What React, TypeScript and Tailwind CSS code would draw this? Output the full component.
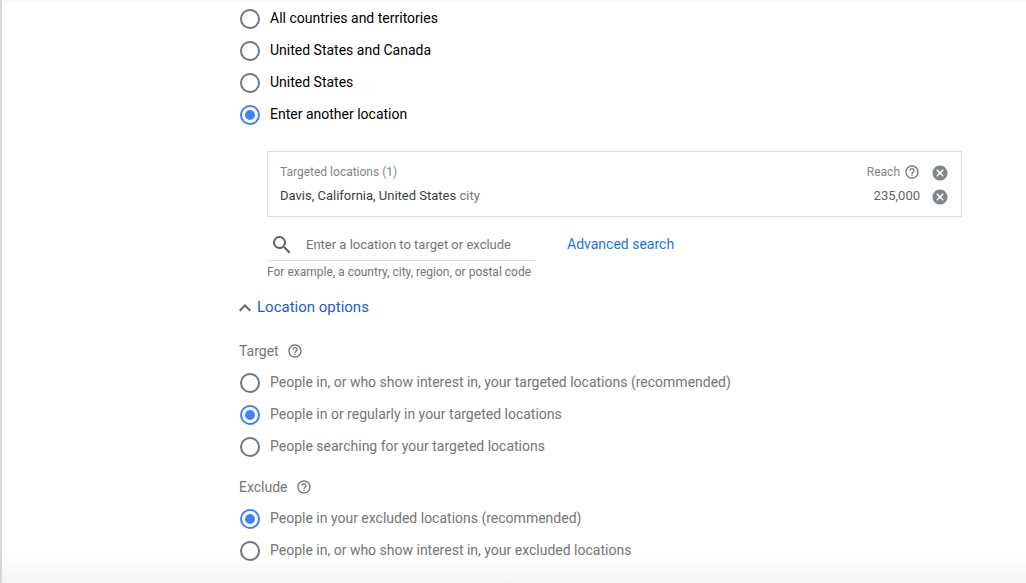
import { useState } from 'react'
import { MdCancel, MdExpandLess, MdHelpOutline, MdSearch } from 'react-icons/md'

interface RadioListProps {
  name: string
  legend: string
  options: string[]
  initial: number
  className?: string
}

const COUNTRY_OPTIONS = [
  'All countries and territories',
  'United States and Canada',
  'United States',
  'Enter another location',
]

const TARGET_OPTIONS = [
  'People in, or who show interest in, your targeted locations (recommended)',
  'People in or regularly in your targeted locations',
  'People searching for your targeted locations',
]

const EXCLUDE_OPTIONS = [
  'People in your excluded locations (recommended)',
  'People in, or who show interest in, your excluded locations',
]

function RadioList({ name, legend, options, initial, className }: RadioListProps) {
  const [selected, setSelected] = useState(initial)

  return (
    <div role="radiogroup" aria-label={legend} className={className}>
      {options.map((option, i) => (
        <label key={option} className="flex h-8 cursor-pointer items-center gap-2.5 pl-px">
          <input
            type="radio"
            name={name}
            checked={selected === i}
            onChange={() => setSelected(i)}
            className="mt-0.5 grid size-5 shrink-0 appearance-none place-items-center rounded-full border-2 border-[#757575] before:size-2.5 before:rounded-full checked:border-[#4080fa] checked:before:bg-[#4080fa]"
          />
          <span>{option}</span>
        </label>
      ))}
    </div>
  )
}

function HelpButton({ label }: { label: string }) {
  return (
    <button type="button" aria-label={label} className="text-[#757575]">
      <MdHelpOutline className="size-4" />
    </button>
  )
}

function RemoveButton({ label }: { label: string }) {
  return (
    <button type="button" aria-label={label} className="mt-0.5 ml-[11px] text-[#80868b]">
      <MdCancel className="size-[18px]" />
    </button>
  )
}

export default function App() {
  return (
    <main className="min-h-screen border-l-2 border-[#d8d8d8] bg-linear-to-t from-[#f5f5f5] to-white to-[28px] font-[Roboto,sans-serif] text-sm text-[#757575]">
      <div className="h-0.5 bg-[#f7f7f7]" />
      <div className="pr-16 pl-[237px]">
        <RadioList
          name="country"
          legend="Locations"
          options={COUNTRY_OPTIONS}
          initial={3}
          className="text-black"
        />

        <div className="mt-[21px] ml-7 flex flex-col border border-[#dadce0] px-3 py-2">
          <div className="flex h-6 items-center text-xs text-[#80868b]">
            <span className="grow">Targeted locations (1)</span>
            <span className="mr-1">Reach</span>
            <HelpButton label="About reach" />
            <RemoveButton label="Remove all locations" />
          </div>
          <div className="flex h-6 items-center text-[13px]">
            <span className="grow">
              <span className="text-[#3c4043]">Davis, California, United States</span> city
            </span>
            <span className="text-[#5f6368]">235,000</span>
            <RemoveButton label="Remove Davis" />
          </div>
        </div>

        <div className="mt-3 ml-7 flex items-start gap-8">
          <div>
            <div className="flex h-8 w-[268px] items-center gap-3 border-b border-[#dadada] pl-[3px]">
              <MdSearch className="size-6 text-[#616161]" />
              <input
                type="text"
                aria-label="Location"
                placeholder="Enter a location to target or exclude"
                className="h-full min-w-0 grow text-[13px] outline-none placeholder:text-[#757575]"
              />
            </div>
            <p className="text-xs leading-[22px]">
              For example, a country, city, region, or postal code
            </p>
          </div>
          <a href="#advanced" className="leading-[30px] text-[#1a73e8]">
            Advanced search
          </a>
        </div>

        <button
          type="button"
          className="mt-[9px] -ml-1.5 flex h-8 items-center text-[15px] text-[#1a5cd8]"
        >
          <MdExpandLess className="size-6 text-[#5f6368]" />
          Location options
        </button>

        <div className="mt-3 flex h-[30px] items-center gap-2">
          Target
          <HelpButton label="About targeting" />
        </div>
        <RadioList name="target" legend="Target" options={TARGET_OPTIONS} initial={1} />

        <div className="mt-2.5 flex h-[30px] items-center gap-2">
          Exclude
          <HelpButton label="About exclusion" />
        </div>
        <RadioList name="exclude" legend="Exclude" options={EXCLUDE_OPTIONS} initial={0} />
      </div>
    </main>
  )
}
